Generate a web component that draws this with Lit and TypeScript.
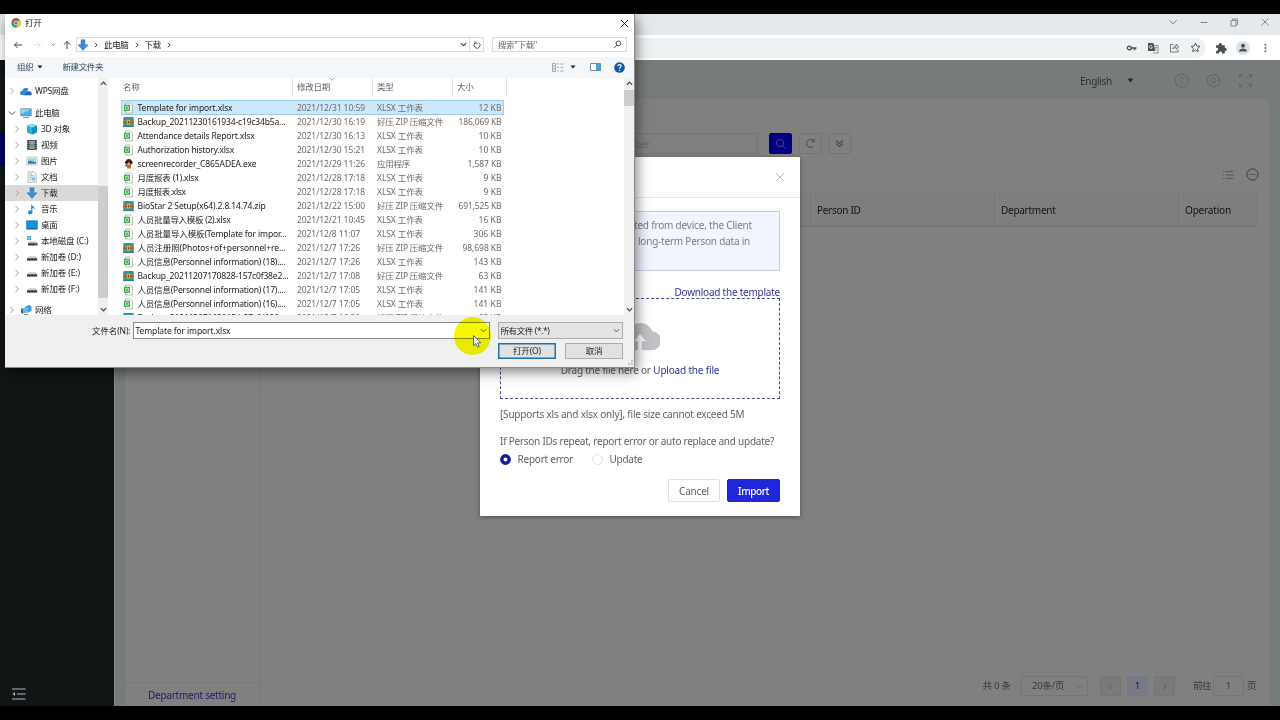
import { LitElement, html, css, svg } from "lit";
import { customElement, property, state } from "lit/decorators.js";
import { styleMap } from "lit/directives/style-map.js";

// One line of text tracked so that it fills a given width.
@customElement("fit-text")
class FitText extends LitElement {
  static styles = css`
    :host { display: inline-block; white-space: pre; flex: none; }
  `;
  @property() text = "";
  @property({ type: Number }) w = 0;
  @state() spacing = 0;

  firstUpdated() {
    const span = this.renderRoot.querySelector("span")!;
    const natural = span.getBoundingClientRect().width;
    if (this.w && natural) this.spacing = (this.w - natural) / this.text.length;
  }

  render() {
    return html`<span style=${styleMap({ letterSpacing: this.spacing + "px" })}>${this.text}</span>`;
  }
}

const fit = (text: string, w: number) => html`<fit-text .text=${text} .w=${w}></fit-text>`;

const chromeLogo = html`<svg width="10" height="10" viewBox="0 0 20 20">
  <circle cx="10" cy="10" r="9.5" fill="#3a9b4e"/>
  <path d="M1.8 5.2A9.5 9.5 0 0 1 18.5 5.5H10L6.2 12z" fill="#d8453a"/>
  <path d="M18.5 5.5A9.5 9.5 0 0 1 9.6 19.5L14 12V5.5z" fill="#f3c337"/>
  <circle cx="10" cy="10" r="4.6" fill="#fff"/><circle cx="10" cy="10" r="3.5" fill="#4384d8"/></svg>`;

const downArrow = html`<svg width="12" height="12" viewBox="0 0 12 12">
  <path d="M4 .8h4v5h3L6 11.4 1 5.8h3z" fill="#3f8fd0" stroke="#2a6ea8" stroke-width=".5"/></svg>`;

const icons: Record<string, unknown> = {
  cloud: svg`<path d="M1 10a2.6 2.6 0 0 1 1.600-4.600A3.400 3.400 0 0 1 8.400 4L5 10.200z" fill="#2f86dc"/><path d="M4.500 10.200C5 7 8.500 5.500 10 6.600c2.200.3 2.400 3.600.3 3.600z" fill="#1e66c0"/>`,
  pc: svg`<path d="M.8 1.800h10.400v7H.8z" fill="#4bb3ea" stroke="#4a6c80" stroke-width=".6"/><path d="M1.200 2.200h9.600L1.200 7z" fill="#8fd6f6"/><path d="M3 10.200h6v.9H3z" fill="#6d8796"/>`,
  cube: svg`<path d="M6 .7 11 2.600v6.800L6 11.400 1 9.400V2.600z" fill="#25b4d2"/><path d="M6 4.500 11 2.600v6.800L6 11.400z" fill="#1690b8"/><path d="M1 2.600 6 .7l5 1.900-5 1.900z" fill="#7fe0ee"/>`,
  video: svg`<path d="M1 1h10v10H1z" fill="#3e474d"/><path d="M3.300 1.700h5.400v4H3.300zM3.300 6.500h5.400v3.800H3.300z" fill="#8fa5b4"/><path d="M1.700 2v9M10.300 2v9" stroke="#ddd" stroke-width=".8" stroke-dasharray="1 1"/><path d="m4 10 2-2.500 2.500 2.500z" fill="#b98b50"/>`,
  picture: svg`<path d="M.8 2h10.400v8H.8z" fill="#f4f8fa" stroke="#9aa8b0" stroke-width=".6"/><path d="M2 3.200h8v5.600H2z" fill="#a8d5ea"/><path d="M2 6.200c3-1.200 5 1.200 8 .8v1.800H2z" fill="#3f7c9c"/>`,
  doc: svg`<path d="M2 .8h6l2.200 2.200v8.200H2z" fill="#f7fafb" stroke="#8a9aa4" stroke-width=".6"/><path d="M3.500 3h2.500M3.500 4.800h5M3.500 6.600h2M3.500 8.400h2" stroke="#5592b0" stroke-width=".7"/><path d="M6.200 6.200h2.600v3.400H6.200z" fill="#78b9d8"/>`,
  music: svg`<path d="M5.200.8c.4 2.200 4 2.800 3.400 6.200-.5-1.600-1.400-2-2.200-2.200v4.600A2.200 1.900 0 1 1 5.200 7.700z" fill="#1d8fd2"/>`,
  desk: svg`<path d="M.6 1.800h10.800v8.400H.6z" fill="#0f93dd" stroke="#0d6cae" stroke-width=".6"/><path d="M.9 9h10.200v.9H.9z" fill="#1b5e90"/>`,
  diskc: svg`<path d="M1 1h1.800v1.800H1zM3.200 1H5v1.800H3.200zM1 3.200h1.800V5H1zM3.200 3.200H5V5H3.200z" fill="#25a7d9"/><path d="M3.200 6.400h7l1.300 2H2z" fill="#bcc3c6"/><path d="M2 8.300h9.600v2.200H2z" fill="#32393d"/><circle cx="10" cy="9.400" r=".5" fill="#6cf08c"/>`,
  disk: svg`<path d="M2.400 5.200h7.200l1.500 2.200H1z" fill="#c6cbce"/><path d="M1 7.300h10.200v2.300H1z" fill="#32393d"/>`,
  net: svg`<path d="M5 2.500 9.500 1l2 1.200v4.500L7.500 9z" fill="#3d9cd6"/><path d="M1 4.500 6.500 3l1.800 1.200v4L3 9.700 1 8.500z" fill="#6db6de"/><path d="M1 4.500 3 5.600v4.100L1 8.500z" fill="#2d6f9c"/><path d="M4 10.500h4" stroke="#678" stroke-width=".9"/>`,
};
const icon = (name: string) =>
  name === "down" ? downArrow : html`<svg width="12" height="12" viewBox="0 0 12 12">${icons[name]}</svg>`;

const fileIcons: Record<string, unknown> = {
  x: html`<svg width="11" height="12" viewBox="0 0 11 12"><path d="M2.500 1h5L9.500 3v8H2.500z" fill="#fdfefd" stroke="#93a396" stroke-width=".7"/><path d="M1 2.700h6v6.200H1z" fill="#3cab4d"/><path d="M2.600 4.300h2.800v3H2.600z" fill="none" stroke="#e6f8e6" stroke-width=".7"/></svg>`,
  z: html`<svg width="11" height="12" viewBox="0 0 11 12"><path d="M.2 1.700 1.300 1h8.400l1.100.7v2.600H.2z" fill="#2d93bd"/><path d="M.2 4.300h10.600v3.600H.2z" fill="#7b5a20"/><path d="M.2 5.200h10.600M.2 7.200h10.600" stroke="#c69a3c" stroke-width=".6"/><path d="M.2 8h10.600v2.600H.2z" fill="#35a36b"/><path d="M.2 10.600h10.600" stroke="#23519b" stroke-width=".8"/><path d="M4 3.800h3v4.800H4z" fill="#f0a531"/><path d="M5 5.200h1v2H5z" fill="#5a3810"/></svg>`,
  e: html`<svg width="11" height="12" viewBox="0 0 11 12"><circle cx="5.800" cy="4" r="3" fill="#3c2a24"/><path d="M2 3.400h3v2H2zM6.500 3.400h3v2h-3z" fill="#111"/><path d="M3.200 6h5.200L7.600 10.600H4.400z" fill="#c8652e"/><circle cx="5.800" cy="5.800" r="1.300" fill="#e8b184"/><path d="m2 6.500 2 1-1 1.500z" fill="#4d2f1d"/></svg>`,
};

type Row = [string, string, number, string, number, string, number, string, number];
const XL = "XLSX 工作表";
const ZP = "好压 ZIP 压缩文件";
const files: Row[] = [
  ["x", "Template for import.xlsx", 95, "2021/12/31 10:59", 68, XL, 46, "12 KB", 23],
  ["z", "Backup_20211230161934-c19c34b5a...", 148, "2021/12/30 16:19", 68, ZP, 66, "186,069 KB", 43],
  ["x", "Attendance details Report.xlsx", 117, "2021/12/30 16:13", 68, XL, 46, "10 KB", 23],
  ["x", "Authorization history.xlsx", 96.500, "2021/12/30 15:21", 68, XL, 46, "10 KB", 23],
  ["e", "screenrecorder_C865ADEA.exe", 119, "2021/12/29 11:26", 68, "应用程序", 33, "1,587 KB", 34],
  ["x", "月度报表 (1).xlsx", 61, "2021/12/28 17:18", 68, XL, 46, "9 KB", 18],
  ["x", "月度报表.xlsx", 48, "2021/12/28 17:18", 68, XL, 46, "9 KB", 18],
  ["z", "BioStar 2 Setup(x64).2.8.14.74.zip", 128, "2021/12/22 15:00", 68, ZP, 66, "691,525 KB", 43],
  ["x", "人员批量导入模板 (2).xlsx", 93, "2021/12/21 10:45", 68, XL, 46, "16 KB", 23],
  ["x", "人员批量导入模板(Template for impor...", 149, "2021/12/8 11:07", 63, XL, 46, "306 KB", 28],
  ["z", "人员注册照(Photos+of+personnel+re...", 148, "2021/12/7 17:26", 63, ZP, 66, "98,698 KB", 39],
  ["x", "人员信息(Personnel information) (18)....", 148, "2021/12/7 17:26", 63, XL, 46, "143 KB", 28],
  ["z", "Backup_20211207170828-157c0f38e2...", 151, "2021/12/7 17:08", 63, ZP, 66, "63 KB", 23],
  ["x", "人员信息(Personnel information) (17)....", 148, "2021/12/7 17:05", 63, XL, 46, "141 KB", 28],
  ["x", "人员信息(Personnel information) (16)....", 148, "2021/12/7 17:05", 63, XL, 46, "141 KB", 28],
  ["z", "Backup_20211207163015-b27cfd190...", 148, "2021/12/7 16:30", 63, ZP, 66, "63 KB", 23],
];

const places: [string, string, number][] = [
  ["cube", "3D 对象", 29], ["video", "视频", 16.500], ["picture", "图片", 16.500], ["doc", "文档", 16.500],
  ["down", "下载", 16.500], ["music", "音乐", 16.500], ["desk", "桌面", 16.500],
  ["diskc", "本地磁盘 (C:)", 47.500], ["disk", "新加卷 (D:)", 40], ["disk", "新加卷 (E:)", 39], ["disk", "新加卷 (F:)", 38.500],
];

const chev = (d: string, w = 8, stroke = "#555", sw = 1) =>
  html`<svg width=${w} height=${w} viewBox="0 0 8 8"><path d=${d} fill="none" stroke=${stroke} stroke-width=${sw}/></svg>`;
const RIGHT = "M2.500 1 5.500 4 2.500 7";
const DOWN = "M1 2.500 4 5.500 7 2.500";
const UP = "M1 5.500 4 2.500 7 5.500";

@customElement("file-dialog")
class FileDialog extends LitElement {
  static styles = css`
    :host {
      display: flex; flex-direction: column; width: 630px; height: 354px; box-sizing: border-box;
      background: #f0f0f0; border-right: 1px solid #8a8a8a; border-bottom: 1px solid #8a8a8a;
      font: 8.500px/14px "Noto Sans", "Noto Sans CJK SC", sans-serif; color: #1c1c1c;
      box-shadow: 2px 4px 12px rgba(0, 0, 0, .5);
    }
    svg { flex: none; display: block; }
    .title { height: 18px; display: flex; align-items: center; background: #fff; padding: 0 5px 0 6px; gap: 4px; }
    .grow { flex: 1; }
    .nav { height: 25px; background: #fff; display: flex; align-items: center; padding: 0 7px 0 7px; box-sizing: border-box; }
    .arrows { width: 64px; display: flex; align-items: center; padding-right: 3px; box-sizing: border-box; }
    .arrows .fwd { margin-left: 8px; } .arrows .hist { margin: 0 6px 0 9px; display: flex; }
    .addr { width: 408px; height: 15px; border: 1px solid #dcdcdc; box-sizing: border-box; display: flex; align-items: center; }
    .crumb { margin-left: 5px; margin-right: 5px; display: flex; }
    .first { margin-left: 4px; }
    .refresh { height: 13px; width: 13px; border-left: 1px solid #dcdcdc; display: flex; align-items: center; justify-content: center; margin-left: 2px; }
    .search { width: 135px; height: 15px; margin-left: 8px; border: 1px solid #dcdcdc; box-sizing: border-box; display: flex; align-items: center; padding: 0 4px 0 5px; justify-content: space-between; color: #666; }
    .tools { height: 21px; background: #f4f7f9; display: flex; align-items: center; padding: 0 9px 1px 12px; box-sizing: border-box; color: #33475e; flex: none; }
    .tools .new { margin-left: 20px; }
    .tools .caret { margin-left: 3px; }
    .tools .view { margin-left: 6px; margin-right: 14px; }
    .tools .pane { margin-right: 13px; }
    .body { height: 237px; display: flex; background: #fff; overflow: hidden; flex: none; }
    .tree { width: 93px; display: flex; flex-direction: column; flex: none; }
    .node { height: 16px; flex: none; display: flex; align-items: center; padding-left: 3px; }
    .node.top { margin: 5px 0 6px; }
    .node svg + svg { margin: 0 3px 0 4px; }
    .node.sub { padding-left: 8px; }
    .node.sub svg + svg { margin: 0 3px 0 5px; }
    .node.here { background: #d9d9d9; }
    .node.net { margin-top: 5px; }
    .bar { width: 10px; background: #f0f0f0; display: flex; flex-direction: column; align-items: center; padding: 2px 0; box-sizing: border-box; flex: none; }
    .bar .thumb { width: 10px; height: 112px; background: #cdcdcd; margin-top: 99px; }
    .bar .thumb.short { height: 16px; margin-top: 3px; }
    .list { flex: 1; padding-left: 13px; overflow: hidden; }
    .heads { display: flex; height: 18px; align-items: center; color: #5a6470; margin-bottom: 4px; }
    .heads div { box-sizing: border-box; height: 18px; border-right: 1px solid #e3e3e3; padding-left: 4px; display: flex; align-items: center; }
    .heads .cn { padding-left: 2px; }
    .cn { width: 172px; } .cd { width: 80px; position: relative; } .ct { width: 80px; } .cs { width: 54px; }
    .sort { position: absolute; left: 36px; top: -2px; }
    .row { display: flex; height: 14px; align-items: center; width: 383px; box-sizing: border-box; color: #6b6b6b; }
    .row div { box-sizing: border-box; display: flex; align-items: center; }
    .row .cn { color: #1c1c1c; padding-left: 2px; gap: 3.500px; }
    .row .cd { padding-left: 4px; } .row .ct { padding-left: 4px; } .row .cs { width: 51px; justify-content: flex-end; padding-right: 2.500px; }
    .row.sel { height: 15px; padding-top: 1px; background: #cce8ff; box-shadow: inset 0 0 0 1px #9accec; }
    .foot { display: flex; align-items: center; padding: 7px 11px 0 87px; height: 17px; }
    .field { margin-left: 2px; width: 357px; height: 17px; box-sizing: border-box; background: #fff; border: 1px solid #868b92; display: flex; align-items: center; justify-content: space-between; padding: 0 2px; }
    .kind { margin-left: 8px; width: 125px; height: 17px; box-sizing: border-box; background: #e4e4e4; border: 1px solid #adadad; display: flex; align-items: center; justify-content: space-between; padding: 0 2px; }
    .acts { display: flex; justify-content: flex-end; gap: 9px; padding: 4px 11px 0 0; }
    .btn { width: 58px; height: 16px; box-sizing: border-box; border: 1px solid #adadad; background: #e1e1e1; display: flex; align-items: center; justify-content: center; }
    .btn.main { border: 1.500px solid #1e72b4; box-shadow: inset 0 0 0 .5px #1e72b4; }
    .grip { align-self: flex-end; }
  `;

  render() {
    return html`
      <div class="title">${chromeLogo}${fit("打开", 16.500)}<span class="grow"></span>
        <svg width="9" height="9" viewBox="0 0 9 9"><path d="m1 1 7 7M8 1 1 8" stroke="#222" stroke-width="1"/></svg></div>
      <div class="nav">
        <div class="arrows">
          <svg width="12" height="10" viewBox="0 0 12 10"><path d="M10 5H2.500M5.500 2l-3 3 3 3" fill="none" stroke="#444"/></svg>
          <svg class="fwd" width="10" height="10" viewBox="0 0 10 10"><path d="M1 5h7M5.500 2l3 3-3 3" fill="none" stroke="#ddd"/></svg>
          <span class="hist">${chev(DOWN, 5, "#777", 1.300)}</span>
          <svg width="10" height="10" viewBox="0 0 10 10"><path d="M5 9V1.500M1.800 4.700 5 1.500l3.200 3.200" fill="none" stroke="#444"/></svg>
        </div>
        <div class="addr">${downArrow}<span class="crumb first">${chev(RIGHT, 6, "#444", 1.300)}</span>${fit("此电脑", 24.500)}
          <span class="crumb">${chev(RIGHT, 6, "#444", 1.300)}</span>${fit("下载", 16.500)}
          <span class="crumb">${chev(RIGHT, 6, "#444", 1.300)}</span><span class="grow"></span>${chev(DOWN, 7, "#444", 1.300)}
          <span class="refresh"><svg width="8" height="8" viewBox="0 0 8 8"><path d="M5.500 1.600A3 3 0 1 1 2 2M2 .3v2h2.200" fill="none" stroke="#444" stroke-width=".9"/></svg></span></div>
        <div class="search">${fit('搜索"下载"', 39)}
          <svg width="9" height="9" viewBox="0 0 9 9"><circle cx="5.500" cy="3.300" r="2.300" fill="none" stroke="#555"/><path d="M4 5 1 8" stroke="#555"/></svg></div>
      </div>
      <div class="tools">${fit("组织", 16.500)}
        <svg class="caret" width="6" height="4" viewBox="0 0 6 4"><path d="M.5.500h5L3 3.500z" fill="#222"/></svg>
        <span class="new">${fit("新建文件夹", 40.500)}</span><span class="grow"></span>
        <svg width="12" height="9" viewBox="0 0 12 9"><path d="M.5.500h3v8h-3zM.5 3h3M.5 6h3M5 1h2M8.500 1h3M5 4.500h2M8.500 4.500h3M5 8h2M8.500 8h3" fill="none" stroke="#9a9fa3" stroke-width=".9"/></svg>
        <svg class="view" width="6" height="4" viewBox="0 0 6 4"><path d="M.5.500h5L3 3.500z" fill="#222"/></svg>
        <svg class="pane" width="11" height="8" viewBox="0 0 11 8"><path d="M.5.500h10v7H.5z" fill="#fff" stroke="#6b8da5"/><path d="M6 1h4.500v6.500H6z" fill="#4c9fd0"/></svg>
        <svg width="11" height="11" viewBox="0 0 11 11"><circle cx="5.500" cy="5.500" r="5.300" fill="#0d59a8"/><path d="M3.900 4.200c0-2.200 3.300-2 3.300-.1 0 1.200-1.600 1.200-1.600 2.500M5.600 7.600v1.200" fill="none" stroke="#fff" stroke-width="1.100"/></svg>
      </div>
      <div class="body">
        <div class="tree">
          <div class="node top">${chev(RIGHT, 8, "#999", .9)}${icon("cloud")}${fit("WPS网盘", 33.500)}</div>
          <div class="node">${chev(DOWN, 8, "#555")}${icon("pc")}${fit("此电脑", 24.500)}</div>
          ${places.map(([i, t, w]) => html`<div class="node sub ${i === "down" ? "here" : ""}">${chev(RIGHT, 8, "#999", .9)}${icon(i)}${fit(t, w)}</div>`)}
          <div class="node net">${chev(RIGHT, 8, "#999", .9)}${icon("net")}${fit("网络", 16.500)}</div>
        </div>
        <div class="bar">${chev(UP, 7, "#444", 1.400)}<div class="thumb"></div><span class="grow"></span>${chev(DOWN, 7, "#444", 1.400)}</div>
        <div class="list">
          <div class="heads"><div class="cn">${fit("名称", 16.500)}</div>
            <div class="cd"><span class="sort">${chev(DOWN, 6, "#888")}</span>${fit("修改日期", 33)}</div>
            <div class="ct">${fit("类型", 16.500)}</div><div class="cs">${fit("大小", 16.500)}</div></div>
          ${files.map(([i, n, nw, d, dw, t, tw, s, sw], k) => html`<div class="row ${k === 0 ? "sel" : ""}">
            <div class="cn">${fileIcons[i]}${fit(n, nw)}</div><div class="cd">${fit(d, dw)}</div>
            <div class="ct">${fit(t, tw)}</div><div class="cs">${fit(s, sw)}</div></div>`)}
        </div>
        <div class="bar">${chev(UP, 7, "#444", 1.400)}<div class="thumb short"></div><span class="grow"></span>${chev(DOWN, 7, "#444", 1.400)}</div>
      </div>
      <div class="foot">${fit("文件名(N):", 38.500)}
        <div class="field">${fit("Template for import.xlsx", 95)}${chev(DOWN, 7, "#444")}</div>
        <div class="kind">${fit("所有文件 (*.*)", 49)}${chev(DOWN, 7, "#444")}</div></div>
      <div class="acts"><div class="btn main">${fit("打开(O)", 28)}</div><div class="btn">${fit("取消", 16.500)}</div></div>
      <svg class="grip" width="8" height="8" viewBox="0 0 8 8"><path d="M5 1h2v2H5zM5 4h2v2H5zM2 4h2v2H2z" fill="#c4c4c4"/></svg>
    `;
  }
}

@customElement("import-modal")
class ImportModal extends LitElement {
  static styles = css`
    :host { display: flex; flex-direction: column; width: 320px; height: 359px; background: #fff; border-radius: 1px; box-shadow: 0 1px 4px rgba(0, 0, 0, .4); color: #606266; }
    svg { display: block; flex: none; }
    .top { height: 40px; border-bottom: 1px solid #e6e8ea; display: flex; align-items: center; justify-content: flex-end; padding-right: 15px; }
    .main { padding: 13px 20px 0; display: flex; flex-direction: column; }
    .note { height: 60px; box-sizing: border-box; border: 1px solid #c5cce6; background: #f2f5fe; padding: 5px 0 0 133px; line-height: 16px; display: flex; flex-direction: column; color: #7b7e84; }
    .second { padding-left: 4px; }
    .link { color: #34349a; }
    .tpl { height: 14px; margin-top: 14px; margin-bottom: -1px; display: flex; justify-content: flex-end; align-items: center; line-height: 14px; }
    .drop { height: 101px; box-sizing: border-box; border: 1px dashed #4a4a8c; display: flex; flex-direction: column; align-items: center; padding-top: 22px; }
    .drag { display: flex; margin-top: 10px; line-height: 16px; gap: 2.500px; }
    .line { margin-top: 7px; line-height: 16px; height: 16px; display: flex; }
    .ask { margin-top: 11px; }
    .radios { display: flex; align-items: center; height: 16px; margin-top: 2px; line-height: 16px; }
    .radios fit-text { margin: -1px 0 0 6.500px; }
    .radios svg + fit-text + svg { margin-left: 19px; }
    .btns { display: flex; justify-content: flex-end; gap: 7px; margin-top: 12px; }
    .btn { height: 23px; box-sizing: border-box; border: 1px solid #dcdfe6; border-radius: 2px; display: flex; align-items: center; justify-content: center; width: 52px; }
    .btn.go { width: 53px; background: #1f27db; border-color: #1f27db; color: #fff; font-weight: 500; }
  `;
  render() {
    return html`
      <div class="top"><svg width="10" height="10" viewBox="0 0 10 10"><path d="m1 1 8 8M9 1 1 9" stroke="#b4b6ba" stroke-width=".9"/></svg></div>
      <div class="main">
        <div class="note">${fit("ted from device, the Client", 118)}<span class="second">${fit("long-term Person data in", 112)}</span></div>
        <div class="tpl link">${fit("Download the template", 105.500)}</div>
        <div class="drop">
          <svg width="40" height="31" viewBox="0 0 42 32"><path d="M10 30A9.600 9.600 0 0 1 8.500 11.200 13.500 13.500 0 0 1 34 10.500 10 10 0 0 1 32 30.500z" fill="#c0c2c6"/><path d="m21 13 6 8h-4v9.500h-4V21h-4z" fill="#fff"/></svg>
          <div class="drag">${fit("Drag the file here or", 90)}<span class="link">${fit("Upload the file", 66)}</span></div>
        </div>
        <div class="line">${fit("[Supports xls and xlsx only], file size cannot exceed 5M", 244.500)}</div>
        <div class="line ask">${fit("If Person IDs repeat, report error or auto replace and update?", 274)}</div>
        <div class="radios">
          <svg width="11" height="11" viewBox="0 0 11 11"><circle cx="5.500" cy="5.500" r="3.700" fill="#fff" stroke="#151aa5" stroke-width="3.400"/></svg>${fit("Report error", 55.500)}
          <svg width="11" height="11" viewBox="0 0 11 11"><circle cx="5.500" cy="5.500" r="5" fill="#fff" stroke="#dcdfe6"/></svg>${fit("Update", 33)}
        </div>
        <div class="btns"><div class="btn">${fit("Cancel", 30)}</div><div class="btn go">${fit("Import", 31)}</div></div>
      </div>`;
  }
}

@customElement("app-root")
class AppRoot extends LitElement {
  static styles = css`
    :host {
      display: flex; flex-direction: column; position: relative; width: 1280px; height: 720px; box-sizing: border-box;
      padding: 14px 0; background: #000; overflow: hidden;
      font: 10px/16px "Noto Sans", "Noto Sans CJK SC", sans-serif; font-stretch: 87%; color: #2f3133;
    }
    svg { display: block; flex: none; }
    .tabs { height: 21px; flex: none; background: #e4e9eb; display: flex; justify-content: flex-end; align-items: center; gap: 20.600px; padding: 0 10px 5px 0; box-sizing: border-box; }
    .omni { height: 25px; flex: none; background: #fff; display: flex; align-items: center; padding: 0 9px 0 60px; box-sizing: border-box; }
    .url { flex: 1; height: 20px; background: #eff2f3; border-radius: 10px; display: flex; align-items: center; justify-content: flex-end; gap: 10px; padding-right: 5px; }
    .ext { display: flex; align-items: center; gap: 9px; margin-left: 9px; }
    .app { flex: 1; min-height: 0; display: flex; background: #767b7c; }
    .side { background: #101516; border-right: 1px solid #8a8c8c; box-sizing: border-box; width: 115px; display: flex; flex-direction: column; justify-content: space-between; padding-top: 73px; }
    .active { height: 33px; background: #00005e; }
    .side svg { margin: 0 0 6px 12px; }
    .page { flex: 1; display: flex; flex-direction: column; }
    .head { height: 39px; display: flex; align-items: center; justify-content: flex-end; padding: 2px 27px 0 0; box-sizing: border-box; }
    .lang { width: 70px; height: 25px; border: 1px solid #727778; box-sizing: border-box; display: flex; align-items: center; padding: 0 8px 0 6px; justify-content: space-between; margin-right: 31px; }
    .head .set { margin: 0 17px; }
    .cols { flex: 1; display: flex; margin: 0 11px 0 10px; background: #808080; min-height: 0; }
    .dept { width: 135px; box-sizing: border-box; border-right: 1px solid #7a7a7a; display: flex; flex-direction: column; justify-content: flex-end; }
    .dept div { height: 23px; border-top: 1px solid #797979; display: flex; align-items: center; justify-content: center; color: #1d1d68; }
    .main { flex: 1; display: flex; flex-direction: column; }
    .filters { display: flex; justify-content: flex-end; align-items: center; margin-top: 34px; padding-right: 418px; gap: 6.500px; }
    .inp { width: 140px; height: 21px; box-sizing: border-box; border: 1px solid #757575; border-radius: 2px; color: #676767; display: flex; align-items: center; padding-left: 16px; margin-right: 4.500px; }
    .sq { width: 23px; height: 21px; box-sizing: border-box; border: 1px solid #757575; border-radius: 2px; display: flex; align-items: center; justify-content: center; }
    .sq.go { background: #00007e; border-color: #00007e; }
    .acts { display: flex; justify-content: flex-end; align-items: center; padding: 14px 10.500px 0 0; gap: 12px; }
    .thead { display: flex; justify-content: flex-end; height: 34px; box-sizing: border-box; border: 1px solid #7a7a7a; border-bottom: 2px solid #777; margin: 12px 12px 0 20px; background: #7e7e7e; color: #141414; }
    .thead div { width: 184px; box-sizing: border-box; border-left: 1px solid #757575; padding-left: 6px; display: flex; align-items: center; }
    .thead div:last-child { width: 78px; }
    .grow { flex: 1; }
    .pager { display: flex; align-items: center; justify-content: flex-end; height: 20px; margin-bottom: 10px; padding-right: 13px; color: #393a3c; font-size: 9.600px; }
    .box { height: 20px; box-sizing: border-box; border: 1px solid #757575; border-radius: 2px; display: flex; align-items: center; justify-content: center; }
    .size { width: 68px; margin: 0 12px 0 9.500px; padding: 0 4px 0 11px; justify-content: space-between; }
    .pg { width: 21px; margin-right: 6px; background: #7a7a7a; }
    .pg.on { background: #777984; border-color: #777984; color: #101070; }
    .goto { margin-left: 12px; }
    .num { width: 31px; margin: 0 3px 0 2px; }
    .empty { position: absolute; left: 740px; top: 444px; width: 70px; height: 10px; border-radius: 2px; background: #7a8084; }
    import-modal { position: absolute; left: 480px; top: 157px; }
    file-dialog { position: absolute; left: 5px; top: 14px; font-stretch: 100%; }
    .spot { position: absolute; left: 454px; top: 317px; width: 37px; height: 38px; border-radius: 50%; background: #f7f700; mix-blend-mode: multiply; }
    .pointer { position: absolute; left: 472px; top: 334px; }
  `;

  render() {
    return html`
      <div class="tabs">
        ${chev(DOWN, 10, "#7c8083", .8)}
        <svg width="10" height="10" viewBox="0 0 10 10"><path d="M1.500 5.500h7" stroke="#7c8083"/></svg>
        <svg width="10" height="10" viewBox="0 0 10 10"><path d="M2 3.500h5V9H2zM3.500 3.300V2h5v5.500H7.200" fill="none" stroke="#7c8083" stroke-width=".9"/></svg>
        <svg width="10" height="10" viewBox="0 0 10 10"><path d="m1.500 1.500 7 7M8.500 1.500l-7 7" stroke="#7c8083" stroke-width=".9"/></svg>
      </div>
      <div class="omni"><div class="url">
          <svg width="11" height="10" viewBox="0 0 11 10"><circle cx="3.300" cy="5" r="1.900" fill="none" stroke="#4a4f53" stroke-width="1.400"/><path d="M5.200 5h5.300M8.700 5v2.300" stroke="#4a4f53" stroke-width="1.500"/></svg>
          <svg width="12" height="12" viewBox="0 0 12 12"><path d="M4.500 3.500h6.500v7.500H6" fill="none" stroke="#72777b" stroke-width=".8"/><path d="M1 1h5.300l2 8H1z" fill="#4a4f53"/><path d="M5.200 4A1.600 1.600 0 1 0 5.400 5.300H4" fill="none" stroke="#fff" stroke-width=".7"/><path d="M7.200 5.500h3M8.800 5c0 2-1 3-1.600 3.500M8 6.500l1.800 2" stroke="#72777b" stroke-width=".6" fill="none"/></svg>
          <svg width="11" height="11" viewBox="0 0 11 11"><path d="M4.500 2.500h-3v7.500h7.500V7.500M3.800 7c.3-2.200 1.600-3 3.400-3V2.300L10 4.800 7.200 7.200V5.600C5.500 5.600 4.500 6 3.800 7z" fill="none" stroke="#5b6064" stroke-width=".8"/></svg>
          <svg width="11" height="11" viewBox="0 0 11 11"><path d="m5.500 1 1.300 3 3.200.3-2.400 2.200.7 3.200-2.800-1.700-2.800 1.700.7-3.200L1 4.300 4.200 4z" fill="none" stroke="#4a4f53" stroke-width=".9"/></svg>
        </div>
        <div class="ext">
          <svg width="12" height="12" viewBox="0 0 11 11"><path d="M1 3h2.500a1.500 1.500 0 1 1 2.800 0H9v2.500a1.400 1.400 0 1 1 0 2.700V10.500H6.400a1.400 1.400 0 1 0-2.700 0H1V8a1.400 1.400 0 1 0 0-2.600z" fill="#4a4f53"/></svg>
          <svg width="14" height="14" viewBox="0 0 14 14"><circle cx="7" cy="7" r="7" fill="#dde2e6"/><circle cx="7" cy="4.800" r="2" fill="#41505a"/><path d="M3 10.500c0-4 8-4 8 0z" fill="#41505a"/></svg>
          <svg width="12" height="10" viewBox="0 0 12 10"><path d="M5.700 1h1.600v1.600H5.700zM5.700 4.200h1.600v1.600H5.700zM5.700 7.400h1.600V9H5.700z" fill="#4a4f53"/></svg>
        </div></div>
      <div class="app">
        <div class="side"><div class="active"></div>
          <svg width="14" height="12" viewBox="0 0 14 12"><path d="M0 1h13.500M5 6h8.500M0 11h13.500" stroke="#b4b8b9" stroke-width="1.100"/><path d="M3 4v4L.5 6z" fill="#b4b8b9"/></svg></div>
        <div class="page">
          <div class="head">
            <div class="lang">${fit("English", 32)}<svg width="7" height="5" viewBox="0 0 7 5"><path d="M.5.500h6L3.500 4.500z" fill="#262829"/></svg></div>
            <svg width="15" height="15" viewBox="0 0 15 15"><circle cx="7.500" cy="7.500" r="6.500" fill="none" stroke="#595e5f" stroke-width=".8"/><path d="M5.800 6.300c0-2.300 3.400-2 3.400-.2 0 1.200-1.700 1.300-1.700 2.600M7.500 9.800v1" fill="none" stroke="#595e5f" stroke-width=".8"/></svg>
            <svg class="set" width="15" height="15" viewBox="0 0 15 15"><path d="M7.500 1 9.600 2.200 12 2.900 13.300 5.200V9.800L12 12.100 9.600 12.800 7.500 14 5.400 12.800 3 12.100 1.700 9.800V5.200L3 2.900 5.400 2.200z" fill="none" stroke="#595e5f" stroke-width=".8"/><circle cx="7.500" cy="7.500" r="2.500" fill="none" stroke="#595e5f" stroke-width=".8"/></svg>
            <svg width="15" height="15" viewBox="0 0 15 15"><path d="M1.500 4.500v-3h3M1.500 1.500l4 4M10.500 1.500h3v3M13.500 1.500l-4 4M1.500 10.500v3h3M1.500 13.500l4-4M10.500 13.500h3v-3M13.500 13.500l-4-4" fill="none" stroke="#595e5f" stroke-width=".8"/></svg>
          </div>
          <div class="cols">
            <div class="dept"><div>${fit("Department setting", 88)}</div></div>
            <div class="main">
              <div class="filters"><div class="inp">${fit("ber", 14)}</div>
                <div class="sq go"><svg width="11" height="11" viewBox="0 0 11 11"><circle cx="5" cy="5" r="3.600" fill="none" stroke="#5a5aa0" stroke-width=".8"/><path d="m7.600 7.600 2.600 2.600" stroke="#5a5aa0" stroke-width=".8"/></svg></div>
                <div class="sq"><svg width="11" height="11" viewBox="0 0 11 11"><path d="M8.600 8.200A4 4 0 1 1 8.600 2.800M9.200 1v2.800H6.500" fill="none" stroke="#484848" stroke-width="1"/></svg></div>
                <div class="sq"><svg width="9" height="9" viewBox="0 0 9 9"><path d="m1 1.500 3.500 3L8 1.500M1 4.500l3.500 3 3.500-3" fill="none" stroke="#484848" stroke-width="1.100"/></svg></div>
              </div>
              <div class="acts">
                <svg width="12" height="12" viewBox="0 0 12 12"><path d="M3.500 2.500h8M3.500 6h8M3.500 9.500h8M.8 2.500h1.200M.8 6h1.200M.8 9.500h1.200" stroke="#565656" stroke-width=".9"/></svg>
                <svg width="13" height="13" viewBox="0 0 13 13"><circle cx="6.500" cy="6.500" r="5.600" fill="none" stroke="#333" stroke-width=".9"/><path d="M3.500 6.500h1.200M5.900 6.500h1.200M8.300 6.500h1.200" stroke="#333" stroke-width="1.200"/></svg>
              </div>
              <div class="thead"><div>${fit("Person ID", 43.500)}</div><div>${fit("Department", 54.500)}</div><div>${fit("Operation", 46)}</div></div>
              <div class="grow"></div>
              <div class="pager">${fit("共 0 条", 28)}
                <div class="box size">${fit("20条/页", 32)}${chev(DOWN, 7, "#606060", .9)}</div>
                <div class="box pg">${chev("M5.500 1 2.500 4 5.500 7", 7, "#555")}</div>
                <div class="box pg on">1</div>
                <div class="box pg">${chev(RIGHT, 7, "#555")}</div>
                <span class="goto">${fit("前往", 18)}</span><div class="box num">1</div>${fit("页", 9)}</div>
            </div>
          </div>
        </div>
      </div>
      <div class="empty"></div>
      <import-modal></import-modal>
      <file-dialog></file-dialog>
      <div class="spot"></div>
      <svg class="pointer" width="10" height="15" viewBox="0 0 10 15"><path d="M1.500 1.500v10.200l2.400-2.200 1.600 3.700 1.700-.8-1.600-3.500h3.200z" fill="#fff" stroke="#444" stroke-width=".8"/></svg>
    `;
  }
}
